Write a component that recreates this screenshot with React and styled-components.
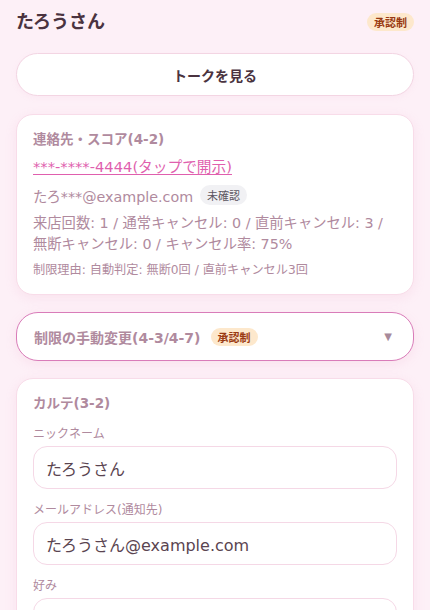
import React from "react";
import styled, { createGlobalStyle } from "styled-components";

const GlobalStyle = createGlobalStyle`
  html, body {
    margin: 0;
    padding: 0;
    background: #fdf0f7;
  }
  body {
    font-family: "DejaVu Sans", "Noto Sans CJK JP", sans-serif;
    color: #4a3340;
  }
  * {
    box-sizing: border-box;
  }
`;

const Page = styled.div`
  padding: 8px 16px 0;
  display: flex;
  flex-direction: column;
`;

const Header = styled.div`
  display: flex;
  align-items: center;
  justify-content: space-between;
  height: 27px;
`;

const Title = styled.h1`
  margin: 0;
  font-size: 18px;
  font-weight: 700;
  line-height: 27px;
  color: #4a3340;
`;

const Badge = styled.span`
  display: inline-flex;
  align-items: center;
  height: ${(p) => (p.$tone === "gray" ? 20 : 18)}px;
  padding: 0 7px;
  border-radius: 10px;
  font-size: 11px;
  background: ${(p) => (p.$tone === "gray" ? "#f1f1f4" : "#fde8cc")};
  color: ${(p) => (p.$tone === "gray" ? "#5b5560" : "#9a3a12")};
  font-weight: ${(p) => (p.$tone === "gray" ? 400 : 700)};
  margin-left: ${(p) => p.$gap || 0}px;
`;

const TalkButton = styled.button`
  margin-top: 18px;
  height: 43px;
  width: 100%;
  border-radius: 22px;
  border: 1px solid #f3d5e3;
  background: #fff;
  font-family: inherit;
  font-size: 14px;
  font-weight: 700;
  color: #4a3340;
  box-shadow: 0 2px 6px rgba(230, 150, 190, 0.08);
`;

const Card = styled.section`
  margin-top: ${(p) => p.$top}px;
  background: #fff;
  border: 1px solid #f8dce9;
  border-radius: 17px;
  padding: 15px 16px 15px;
  box-shadow: 0 3px 12px rgba(225, 140, 185, 0.14);
`;

const CardTitle = styled.h2`
  margin: 0;
  font-size: 13.5px;
  font-weight: 700;
  line-height: 18px;
  color: #b08a9e;
`;

const RevealLink = styled.a`
  display: block;
  margin-top: 9px;
  font-size: 14.7px;
  line-height: 20px;
  color: #e05fae;
  text-decoration: underline;
  text-decoration-thickness: 1px;
  text-underline-offset: 2px;
`;

const EmailRow = styled.div`
  margin-top: 7px;
  display: flex;
  align-items: center;
  height: 22px;
  font-size: 14.3px;
  color: #b08a9e;
`;

const Stats = styled.p`
  margin: 7px 0 0;
  font-size: 14.3px;
  line-height: 21px;
  color: #b08a9e;
`;

const Reason = styled.p`
  margin: 6px 0 0;
  font-size: 12.2px;
  line-height: 18px;
  color: #b08a9e;
`;

const Accordion = styled.div`
  margin-top: 17px;
  height: 49px;
  background: #fff;
  border: 1px solid #d97cb9;
  border-radius: 22px;
  padding: 0 17px;
  display: flex;
  align-items: center;
  box-shadow: 0 3px 12px rgba(225, 140, 185, 0.14);
`;

const AccordionTitle = styled.span`
  font-size: 14px;
  font-weight: 700;
  color: #b08a9e;
`;

const Caret = styled.span`
  margin-left: auto;
  margin-right: 4px;
  font-size: 10px;
  color: #a88a9b;
`;

const Label = styled.label`
  display: block;
  margin-top: ${(p) => p.$top}px;
  font-size: 12px;
  line-height: 17px;
  color: #b08a9e;
`;

const Input = styled.input`
  display: block;
  margin-top: 3px;
  width: 100%;
  height: 43px;
  border: 1px solid #f5d8e6;
  border-radius: 14px;
  padding: 0 12px;
  font-family: inherit;
  font-size: 16px;
  color: #5a4450;
  background: #fff;
  outline: none;
`;

export default function App() {
  return (
    <>
      <GlobalStyle />
      <Page>
        <Header>
          <Title>たろうさん</Title>
          <Badge>承認制</Badge>
        </Header>
        <TalkButton>トークを見る</TalkButton>

        <Card $top={18}>
          <CardTitle>連絡先・スコア(4-2)</CardTitle>
          <RevealLink href="#">***-****-4444(タップで開示)</RevealLink>
          <EmailRow>
            たろ***@example.com
            <Badge $tone="gray" $gap={7}>未確認</Badge>
          </EmailRow>
          <Stats>
            来店回数: 1 / 通常キャンセル: 0 / 直前キャンセル: 3 / 無断キャンセル: 0 / キャンセル率: 75%
          </Stats>
          <Reason>制限理由: 自動判定: 無断0回 / 直前キャンセル3回</Reason>
        </Card>

        <Accordion>
          <AccordionTitle>制限の手動変更(4-3/4-7)</AccordionTitle>
          <Badge $gap={10}>承認制</Badge>
          <Caret>▼</Caret>
        </Accordion>

        <Card $top={17}>
          <CardTitle>カルテ(3-2)</CardTitle>
          <Label $top={14}>ニックネーム</Label>
          <Input defaultValue="たろうさん" />
          <Label $top={13}>メールアドレス(通知先)</Label>
          <Input defaultValue="たろうさん@example.com" />
          <Label $top={13}>好み</Label>
          <Input defaultValue="" />
        </Card>
      </Page>
    </>
  );
}
